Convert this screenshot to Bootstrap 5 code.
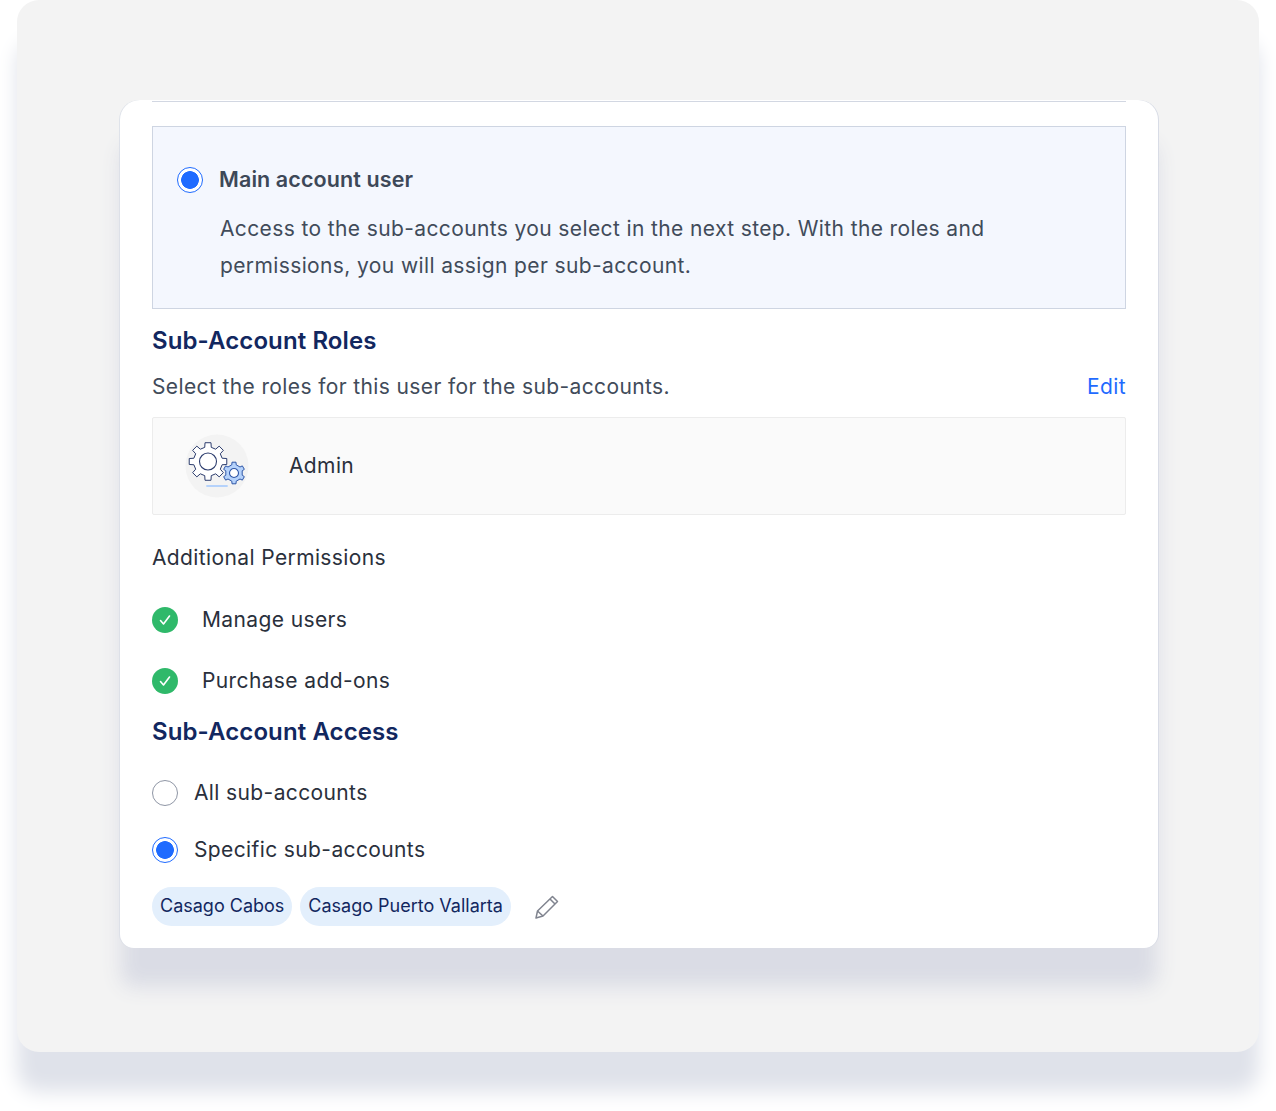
<!DOCTYPE html>
<html lang="en">
<head>
<meta charset="utf-8">
<title>Sub-account user</title>
<link href="https://cdn.jsdelivr.net/npm/bootstrap@5.3.0/dist/css/bootstrap.min.css" rel="stylesheet">
<style>
html,body{margin:0;background:#fff;height:1111px;overflow:hidden}
body{font-family:Inter,"Liberation Sans",sans-serif;color:#2a303c;font-size:21px;letter-spacing:.38px}
.stage{margin:0 17px;height:1052px;background:#f3f3f3;border-radius:22px;padding:100px 101px 0 103px;box-shadow:0 40px 20px 0 #dfe2ea}
.sheet{height:848px;background:#fff;border-radius:20px 20px 14px 14px;padding:0 32px;box-shadow:0 40px 20px -1px #dadce5,-1px 0 0 #dfe3ea,1px 0 0 #d8dce6;overflow:hidden}
.topline{height:2px;border-bottom:1px solid #d2d7e2;margin-bottom:24px}
.mainbox{height:183px;background:#f4f7fe;border:1px solid #ced5e2;padding:40px 24px 0}
.mainbox .desc{margin:17px 0 0 43px;max-width:800px;line-height:37px;color:#414b5a}
.rowline{display:flex;align-items:center}
.radio-lg{width:26px;height:26px;margin:0;flex:none;border:1px solid #8f96a5;background:#fff;appearance:none;border-radius:50%;display:block}
.radio-lg:checked{border-color:#1f6bff;background:radial-gradient(circle,#1f6bff 0 8.5px,#fff 9.2px)}
.mainlabel{margin-left:16px;font-weight:600;color:#3d4858;font-size:21.5px;letter-spacing:.1px;line-height:24px;padding-bottom:2px}
.subhead{font-size:24px;font-weight:600;color:#12275f;line-height:32px;margin:0;letter-spacing:.1px}
.roles-head{margin-top:16px}
.roles-note{margin:14px 0 0;height:32px;color:#414b5a;line-height:32px}
.edit-link{color:#1f6bff;text-decoration:none}
.rolebox{height:98px;margin-top:14px;background:#fafafa;border:1px solid #ececec;border-radius:2px;padding-left:32px;display:flex;align-items:center}
.rolebox span{margin-left:40px}
.perm-title{margin:27px 0 0;line-height:32px;height:32px}
.permrow{height:26px;display:flex;align-items:center;gap:24px}
.permrow svg{flex:none}
.gap1{margin-top:33px}.gap2{margin-top:35px}
.access-head{margin-top:22px}
.choice{height:26px;display:flex;align-items:center;gap:16px}
.choice-first{margin-top:32px}
.choice-next{margin-top:31px}
.chiprow{margin-top:24px;display:flex;align-items:center;gap:8px}
.chip-item{height:39px;border-radius:20px;background:#e3effc;color:#12275f;font-size:18px;letter-spacing:0;line-height:38px;padding:0 8px}
.chiprow svg{margin-left:16px}
</style>
</head>
<body>
<div class="stage">
  <div class="sheet">
    <div class="topline"></div>
    <div class="mainbox">
      <div class="rowline">
        <input class="radio-lg" type="radio" name="kind" checked aria-label="Main account user">
        <span class="mainlabel">Main account user</span>
      </div>
      <p class="desc">Access to the sub-accounts you select in the next step. With the roles and permissions, you will assign per sub-account.</p>
    </div>
    <h2 class="subhead roles-head">Sub-Account Roles</h2>
    <div class="roles-note d-flex justify-content-between">
      <span>Select the roles for this user for the sub-accounts.</span>
      <a class="edit-link" href="#">Edit</a>
    </div>
    <div class="rolebox">
      <svg width="64" height="64" viewBox="0 0 64 64" fill="none" aria-hidden="true">
        <circle cx="32" cy="32" r="31.5" fill="#f3f3f3"/>
        <g transform="translate(23 27.500)" stroke="#2d3d6e" stroke-linejoin="round">
          <path fill="#fff" stroke-width="1" d="M-3.26-14.13L-2.97-18.77 2.97-18.77 3.26-14.13 7.69-12.30 11.17-15.37 15.37-11.17 12.30-7.69 14.13-3.26 18.77-2.97 18.77 2.97 14.13 3.26 12.30 7.69 15.37 11.17 11.17 15.37 7.69 12.30 3.26 14.13 2.97 18.77-2.97 18.77-3.26 14.13-7.69 12.30-11.17 15.37-15.37 11.17-12.30 7.69-14.13 3.26-18.77 2.97-18.77-2.97-14.13-3.26-12.30-7.69-15.37-11.17-11.17-15.37-7.69-12.30Z"/>
          <circle r="8.500" fill="#fff" stroke-width="1.100"/>
        </g>
        <g transform="translate(49 39)" stroke="#2f57a8" stroke-linejoin="round">
          <path fill="#b5d2fb" stroke-width="1" d="M-2.200-8.200L-2-10.800 2-10.800 2.200-8.200 6-6 8.350-7.130 10.350-3.670 8.200-2.200 8.200 2.200 10.350 3.670 8.350 7.130 6 6 2.200 8.200 2 10.800-2 10.800-2.200 8.200-6 6-8.350 7.130-10.350 3.670-8.200 2.200-8.200-2.200-10.350-3.670-8.350-7.130-6-6Z"/>
          <circle r="4.500" fill="#fff" stroke-width="1.100"/>
        </g>
        <path d="M22 52h20" stroke="#b5d2fb" stroke-width="1.800" stroke-linecap="round"/>
      </svg>
      <span>Admin</span>
    </div>
    <p class="perm-title">Additional Permissions</p>
    <div class="permrow gap1">
      <svg width="26" height="26" viewBox="0 0 26 26" aria-hidden="true"><circle cx="13" cy="13" r="13" fill="#2fb96a"/><path d="M8.500 13.500l3 3.500 6-8" fill="none" stroke="#fff" stroke-width="1.600" stroke-linecap="round" stroke-linejoin="round"/></svg>
      <span>Manage users</span>
    </div>
    <div class="permrow gap2">
      <svg width="26" height="26" viewBox="0 0 26 26" aria-hidden="true"><circle cx="13" cy="13" r="13" fill="#2fb96a"/><path d="M8.500 13.500l3 3.500 6-8" fill="none" stroke="#fff" stroke-width="1.600" stroke-linecap="round" stroke-linejoin="round"/></svg>
      <span>Purchase add-ons</span>
    </div>
    <h2 class="subhead access-head">Sub-Account Access</h2>
    <label class="choice choice-first">
      <input class="radio-lg" type="radio" name="access">
      <span>All sub-accounts</span>
    </label>
    <label class="choice choice-next">
      <input class="radio-lg" type="radio" name="access" checked>
      <span>Specific sub-accounts</span>
    </label>
    <div class="chiprow">
      <span class="chip-item">Casago Cabos</span>
      <span class="chip-item">Casago Puerto Vallarta</span>
      <svg width="24" height="24" viewBox="0 0 24 24" fill="none" stroke="#80848f" stroke-width="1.500" stroke-linejoin="round" aria-hidden="true"><path d="M1 23l1.500-7L17.500 1.500l5 5L8 21z"/><path d="M2.500 16l5.500 5M15 4l5 5"/></svg>
    </div>
  </div>
</div>
<script src="https://cdn.jsdelivr.net/npm/bootstrap@5.3.0/dist/js/bootstrap.bundle.min.js"></script>
</body>
</html>
